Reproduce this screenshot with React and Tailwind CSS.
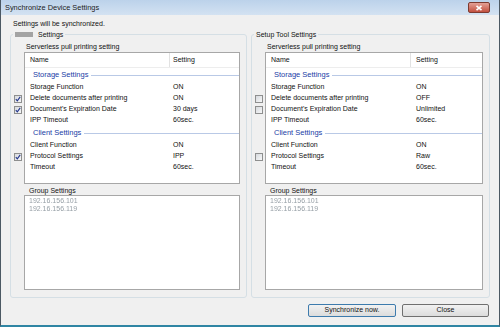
import React from 'react'

const leftRows = [
  { cat: 'Storage Settings' },
  { name: 'Storage Function', value: 'ON' },
  { name: 'Delete documents after printing', value: 'ON', box: true, checked: true },
  { name: "Document's Expiration Date", value: '30 days', box: true, checked: true },
  { name: 'IPP Timeout', value: '60sec.' },
  { cat: 'Client Settings' },
  { name: 'Client Function', value: 'ON' },
  { name: 'Protocol Settings', value: 'IPP', box: true, checked: true },
  { name: 'Timeout', value: '60sec.' },
]

const rightRows = [
  { cat: 'Storage Settings' },
  { name: 'Storage Function', value: 'ON' },
  { name: 'Delete documents after printing', value: 'OFF', box: true },
  { name: "Document's Expiration Date", value: 'Unlimited', box: true },
  { name: 'IPP Timeout', value: '60sec.' },
  { cat: 'Client Settings' },
  { name: 'Client Function', value: 'ON' },
  { name: 'Protocol Settings', value: 'Raw', box: true },
  { name: 'Timeout', value: '60sec.' },
]

function CheckBox({ checked }) {
  return (
    <span className="flex h-[8px] w-[8px] items-center justify-center border border-[#8e8f8f] bg-gradient-to-br from-[#d6d9dd] to-[#f7f8f9]">
      {checked && (
        <svg width="6" height="6" viewBox="0 0 6 6">
          <path d="M0.8 3.2 L2.3 4.9 L5.2 0.9" stroke="#22358c" strokeWidth="1.1" fill="none" />
        </svg>
      )}
    </span>
  )
}

// sits left of the list, rows line up with the list rows
function CheckColumn({ rows }) {
  return (
    <div className="flex w-[13px] flex-col pt-[43px] pl-[3px]">
      {rows.map((r, i) =>
        r.cat ? (
          i === 0 ? null : <div key={i} className="h-[14px]" />
        ) : (
          <div key={i} className="flex h-[11px] items-center">
            {r.box && <CheckBox checked={r.checked} />}
          </div>
        )
      )}
    </div>
  )
}

function SettingsList({ rows, width, sep, valueX }) {
  return (
    <div className={`flex h-[132px] flex-col border border-[#a7a7a7] bg-white ${width}`}>
      <div className="flex h-[15px] items-stretch border-b border-[#ededed]">
        <div className={`flex items-center border-r border-[#e2e2e2] pl-[5px] ${sep}`}>Name</div>
        <div className={`flex items-center ${valueX}`}>Setting</div>
      </div>
      {rows.map((r, i) =>
        r.cat ? (
          <div key={i} className="flex h-[14px] items-center pl-[8px]">
            <span className="text-[7.5px] text-[#1a3da6]">{r.cat}</span>
            <span className="ml-[3px] h-px flex-1 bg-[#b9c9e6]" />
          </div>
        ) : (
          <div key={i} className="flex h-[11px] items-center">
            <div className={`pl-[5px] ${sep}`}>{r.name}</div>
            <div className={valueX}>{r.value}</div>
          </div>
        )
      )}
    </div>
  )
}

function GroupBox() {
  return (
    <div className="flex h-[95px] flex-col border border-[#a7a7a7] bg-white pl-[4px] pt-[1px] leading-[8px]">
      <span className="text-[#959ea5] blur-[0.7px]">192.16.156.101</span>
      <span className="text-[#959ea5] blur-[0.7px]">192.16.156.119</span>
    </div>
  )
}

function Panel({ legend, rows, width, listWidth, sep, valueX }) {
  return (
    <fieldset className={`flex h-[268px] flex-col rounded-[3px] border border-[#d5dfe5] pb-[6px] ${width}`}>
      <legend className="ml-[2px] flex h-[9px] items-center px-[2px] leading-[9px]">{legend}</legend>
      <div className="flex">
        <CheckColumn rows={rows} />
        <div className="flex flex-col">
          <div className="mt-[3px] h-[9px] pl-[2px] leading-[9px]">Serverless pull printing setting</div>
          <div className="mt-[1px]">
            <SettingsList rows={rows} width={listWidth} sep={sep} valueX={valueX} />
          </div>
          <div className="mt-[1.5px] h-[9px] pl-[5px] leading-[9px]">Group Settings</div>
          <div className={listWidth}>
            <GroupBox />
          </div>
        </div>
      </div>
    </fieldset>
  )
}

export default function App() {
  return (
    <div className="flex h-[327px] w-[500px] flex-col border-x border-b-2 border-x-[#4b5863] border-b-[#2f85a3] bg-[#f0f0f0] font-['Liberation_Sans',Arial,sans-serif] text-[7px] text-[#111]">
      {/* title bar */}
      <div className="flex h-[15px] items-center justify-between bg-gradient-to-b from-[#bcd2ea] to-[#d3e2f2] pl-[4px] pr-[9px]">
        <span className="text-[7.4px] text-[#1b1b1b]">Synchronize Device Settings</span>
        <div className="flex h-[11px] w-[22px] items-center justify-center rounded-[2px] border border-[#7d3a30] bg-gradient-to-b from-[#e3a096] to-[#c24f3f]">
          <svg width="8" height="6" viewBox="0 0 8 6">
            <path d="M1.5 0.8 L6.5 5.2 M6.5 0.8 L1.5 5.2" stroke="#fff" strokeWidth="1.6" />
          </svg>
        </div>
      </div>

      <div className="flex flex-1 flex-col pl-[9px] pr-[9px] pt-[4px]">
        <div className="h-[9px] pl-[3px] leading-[9px]">Settings will be synchronized.</div>

        <div className="mt-[2px] flex gap-[4px]">
          <Panel
            legend={
              <span className="flex items-center">
                <span className="mr-[5px] h-[5px] w-[18px] bg-[#a3a3a3] blur-[0.5px]" />
                Settings
              </span>
            }
            rows={leftRows}
            width="w-[237px]"
            listWidth="w-[216px]"
            sep="w-[145px]"
            valueX="pl-[3px]"
          />
          <Panel
            legend="Setup Tool Settings"
            rows={rightRows}
            width="w-[239px]"
            listWidth="w-[218px]"
            sep="w-[145px]"
            valueX="pl-[5px]"
          />
        </div>

        <div className="mt-[6px] flex justify-end gap-[6px] pr-[1px]">
          <button className="flex h-[13px] w-[88px] items-center justify-center rounded-[2px] border border-[#3d7bad] bg-gradient-to-b from-[#f2f2f2] to-[#dcdcdc] text-[7px]">
            Synchronize now.
          </button>
          <button className="flex h-[13px] w-[87px] items-center justify-center rounded-[2px] border border-[#707070] bg-gradient-to-b from-[#f2f2f2] to-[#dcdcdc] text-[7px]">
            Close
          </button>
        </div>
      </div>
    </div>
  )
}
